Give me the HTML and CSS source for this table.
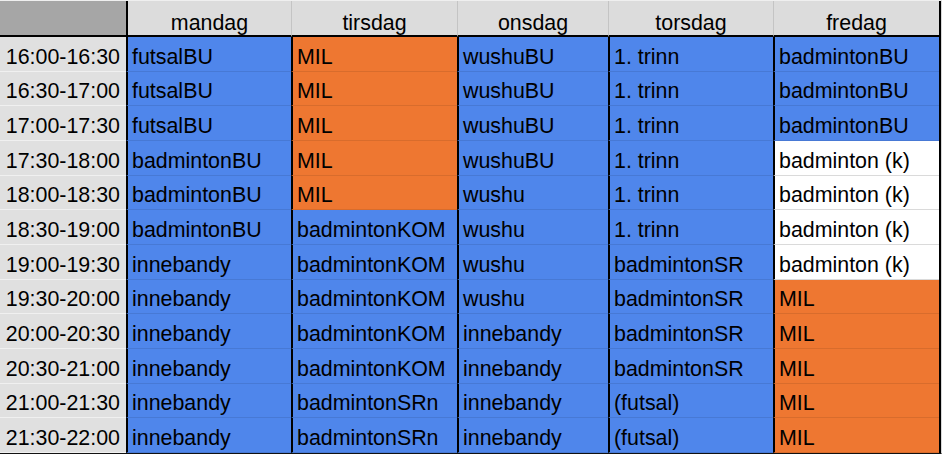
FILE: index.html
```html
<!DOCTYPE html>
<html lang="no">
<head>
<meta charset="utf-8">
<title>Timeplan</title>
<link rel="stylesheet" href="styles.css">
</head>
<body>
<div class="sheet">
  <div class="hd corner"></div>
  <div class="hd first">mandag</div>
  <div class="hd">tirsdag</div>
  <div class="hd">onsdag</div>
  <div class="hd">torsdag</div>
  <div class="hd">fredag</div>

  <div class="time">16:00-16:30</div><div class="c b">futsalBU</div><div class="c o">MIL</div><div class="c b">wushuBU</div><div class="c b">1. trinn</div><div class="c b">badmintonBU</div>
  <div class="time">16:30-17:00</div><div class="c b">futsalBU</div><div class="c o">MIL</div><div class="c b">wushuBU</div><div class="c b">1. trinn</div><div class="c b">badmintonBU</div>
  <div class="time">17:00-17:30</div><div class="c b">futsalBU</div><div class="c o">MIL</div><div class="c b">wushuBU</div><div class="c b">1. trinn</div><div class="c b">badmintonBU</div>
  <div class="time">17:30-18:00</div><div class="c b">badmintonBU</div><div class="c o">MIL</div><div class="c b">wushuBU</div><div class="c b">1. trinn</div><div class="c w">badminton (k)</div>
  <div class="time">18:00-18:30</div><div class="c b">badmintonBU</div><div class="c o">MIL</div><div class="c b">wushu</div><div class="c b">1. trinn</div><div class="c w">badminton (k)</div>
  <div class="time">18:30-19:00</div><div class="c b">badmintonBU</div><div class="c b">badmintonKOM</div><div class="c b">wushu</div><div class="c b">1. trinn</div><div class="c w">badminton (k)</div>
  <div class="time">19:00-19:30</div><div class="c b">innebandy</div><div class="c b">badmintonKOM</div><div class="c b">wushu</div><div class="c b">badmintonSR</div><div class="c w">badminton (k)</div>
  <div class="time">19:30-20:00</div><div class="c b">innebandy</div><div class="c b">badmintonKOM</div><div class="c b">wushu</div><div class="c b">badmintonSR</div><div class="c o">MIL</div>
  <div class="time">20:00-20:30</div><div class="c b">innebandy</div><div class="c b">badmintonKOM</div><div class="c b">innebandy</div><div class="c b">badmintonSR</div><div class="c o">MIL</div>
  <div class="time">20:30-21:00</div><div class="c b">innebandy</div><div class="c b">badmintonKOM</div><div class="c b">innebandy</div><div class="c b">badmintonSR</div><div class="c o">MIL</div>
  <div class="time">21:00-21:30</div><div class="c b">innebandy</div><div class="c b">badmintonSRn</div><div class="c b">innebandy</div><div class="c b">(futsal)</div><div class="c o">MIL</div>
  <div class="time">21:30-22:00</div><div class="c b">innebandy</div><div class="c b">badmintonSRn</div><div class="c b">innebandy</div><div class="c b">(futsal)</div><div class="c o">MIL</div>
</div>
</body>
</html>
```

FILE: styles.css
```css
* { box-sizing: border-box; }
html, body { margin: 0; padding: 0; background: #ffffff; }
body {
  font-family: "Liberation Sans", Arial, sans-serif;
  font-size: 21.4px;
  color: #000;
}
.sheet {
  width: 942px;
  height: 454px;
  display: grid;
  grid-template-columns: 126px 165px 166px 151px 165px 166px;
  grid-template-rows: 36px repeat(12, 1fr);
  border-top: 1px solid #efefef;
  border-bottom: 1px solid #111;
  border-right: 1px solid #d8d8d8;
  background: #dcdcdc;
  box-shadow: inset -2px 0 0 #000;
  padding-right: 2px;
}
.hd {
  background: #dcdcdc;
  border-bottom: 2px solid #000;
  border-left: 1px solid #c4c4c4;
  display: flex;
  align-items: flex-end;
  justify-content: center;
  line-height: 24px;
  padding-bottom: 0;
  white-space: nowrap;
}
.hd.corner {
  background: #a6a6a6;
  border-left: 0;
}
.hd.first {
  border-left: 2px solid #000;
}
.time {
  background: #e0e0e0;
  border-bottom: 1px solid #f0f0f0;
  display: flex;
  align-items: flex-end;
  justify-content: flex-end;
  padding: 0 6px 2px 0;
  line-height: 24px;
  white-space: nowrap;
}
.c {
  border-left: 2px solid #000;
  border-bottom: 1px solid rgba(0, 0, 0, 0.09);
  display: flex;
  align-items: flex-end;
  padding: 0 0 2px 4px;
  line-height: 24px;
  white-space: nowrap;
  overflow: hidden;
}
.c.b { background: #4f86eb; }
.c.o { background: #ee7731; }
.c.w { background: #ffffff; border-bottom-color: #dadada; }
```
